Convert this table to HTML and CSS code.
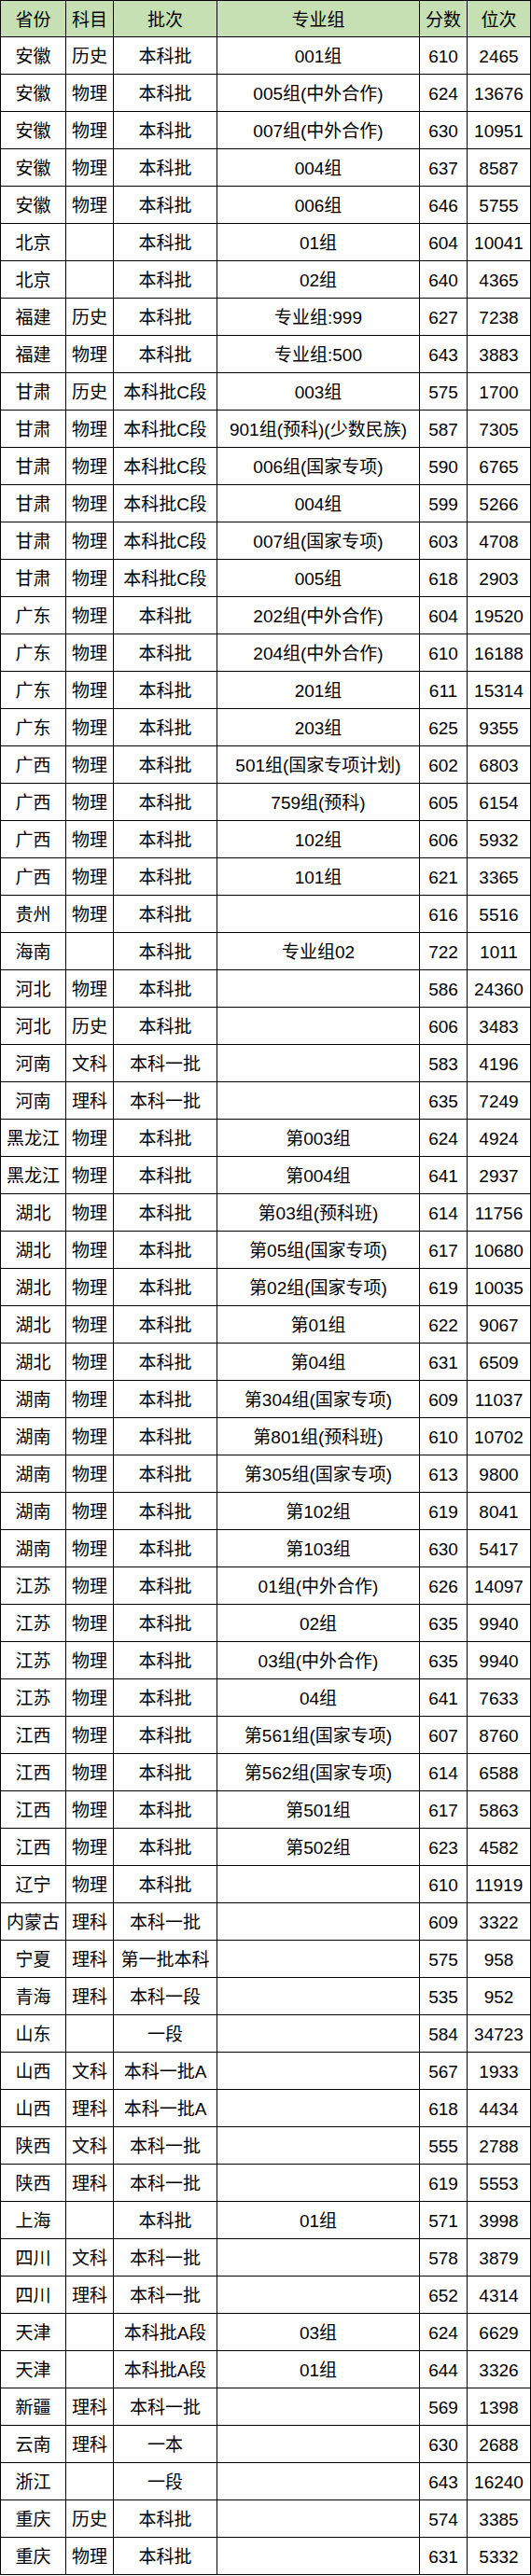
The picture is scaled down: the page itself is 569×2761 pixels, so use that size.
FILE: index.html
```html
<!DOCTYPE html>
<html lang="zh-CN">
<head>
<meta charset="utf-8">
<title>分数位次</title>
<link rel="stylesheet" href="styles.css">
</head>
<body>
<div class="sheet">
<div class="th">省份</div><div class="th">科目</div><div class="th">批次</div><div class="th">专业组</div><div class="th">分数</div><div class="th">位次</div>
<div>安徽</div><div>历史</div><div>本科批</div><div>001组</div><div>610</div><div>2465</div>
<div>安徽</div><div>物理</div><div>本科批</div><div>005组(中外合作)</div><div>624</div><div>13676</div>
<div>安徽</div><div>物理</div><div>本科批</div><div>007组(中外合作)</div><div>630</div><div>10951</div>
<div>安徽</div><div>物理</div><div>本科批</div><div>004组</div><div>637</div><div>8587</div>
<div>安徽</div><div>物理</div><div>本科批</div><div>006组</div><div>646</div><div>5755</div>
<div>北京</div><div></div><div>本科批</div><div>01组</div><div>604</div><div>10041</div>
<div>北京</div><div></div><div>本科批</div><div>02组</div><div>640</div><div>4365</div>
<div>福建</div><div>历史</div><div>本科批</div><div>专业组:999</div><div>627</div><div>7238</div>
<div>福建</div><div>物理</div><div>本科批</div><div>专业组:500</div><div>643</div><div>3883</div>
<div>甘肃</div><div>历史</div><div>本科批C段</div><div>003组</div><div>575</div><div>1700</div>
<div>甘肃</div><div>物理</div><div>本科批C段</div><div>901组(预科)(少数民族)</div><div>587</div><div>7305</div>
<div>甘肃</div><div>物理</div><div>本科批C段</div><div>006组(国家专项)</div><div>590</div><div>6765</div>
<div>甘肃</div><div>物理</div><div>本科批C段</div><div>004组</div><div>599</div><div>5266</div>
<div>甘肃</div><div>物理</div><div>本科批C段</div><div>007组(国家专项)</div><div>603</div><div>4708</div>
<div>甘肃</div><div>物理</div><div>本科批C段</div><div>005组</div><div>618</div><div>2903</div>
<div>广东</div><div>物理</div><div>本科批</div><div>202组(中外合作)</div><div>604</div><div>19520</div>
<div>广东</div><div>物理</div><div>本科批</div><div>204组(中外合作)</div><div>610</div><div>16188</div>
<div>广东</div><div>物理</div><div>本科批</div><div>201组</div><div>611</div><div>15314</div>
<div>广东</div><div>物理</div><div>本科批</div><div>203组</div><div>625</div><div>9355</div>
<div>广西</div><div>物理</div><div>本科批</div><div>501组(国家专项计划)</div><div>602</div><div>6803</div>
<div>广西</div><div>物理</div><div>本科批</div><div>759组(预科)</div><div>605</div><div>6154</div>
<div>广西</div><div>物理</div><div>本科批</div><div>102组</div><div>606</div><div>5932</div>
<div>广西</div><div>物理</div><div>本科批</div><div>101组</div><div>621</div><div>3365</div>
<div>贵州</div><div>物理</div><div>本科批</div><div></div><div>616</div><div>5516</div>
<div>海南</div><div></div><div>本科批</div><div>专业组02</div><div>722</div><div>1011</div>
<div>河北</div><div>物理</div><div>本科批</div><div></div><div>586</div><div>24360</div>
<div>河北</div><div>历史</div><div>本科批</div><div></div><div>606</div><div>3483</div>
<div>河南</div><div>文科</div><div>本科一批</div><div></div><div>583</div><div>4196</div>
<div>河南</div><div>理科</div><div>本科一批</div><div></div><div>635</div><div>7249</div>
<div>黑龙江</div><div>物理</div><div>本科批</div><div>第003组</div><div>624</div><div>4924</div>
<div>黑龙江</div><div>物理</div><div>本科批</div><div>第004组</div><div>641</div><div>2937</div>
<div>湖北</div><div>物理</div><div>本科批</div><div>第03组(预科班)</div><div>614</div><div>11756</div>
<div>湖北</div><div>物理</div><div>本科批</div><div>第05组(国家专项)</div><div>617</div><div>10680</div>
<div>湖北</div><div>物理</div><div>本科批</div><div>第02组(国家专项)</div><div>619</div><div>10035</div>
<div>湖北</div><div>物理</div><div>本科批</div><div>第01组</div><div>622</div><div>9067</div>
<div>湖北</div><div>物理</div><div>本科批</div><div>第04组</div><div>631</div><div>6509</div>
<div>湖南</div><div>物理</div><div>本科批</div><div>第304组(国家专项)</div><div>609</div><div>11037</div>
<div>湖南</div><div>物理</div><div>本科批</div><div>第801组(预科班)</div><div>610</div><div>10702</div>
<div>湖南</div><div>物理</div><div>本科批</div><div>第305组(国家专项)</div><div>613</div><div>9800</div>
<div>湖南</div><div>物理</div><div>本科批</div><div>第102组</div><div>619</div><div>8041</div>
<div>湖南</div><div>物理</div><div>本科批</div><div>第103组</div><div>630</div><div>5417</div>
<div>江苏</div><div>物理</div><div>本科批</div><div>01组(中外合作)</div><div>626</div><div>14097</div>
<div>江苏</div><div>物理</div><div>本科批</div><div>02组</div><div>635</div><div>9940</div>
<div>江苏</div><div>物理</div><div>本科批</div><div>03组(中外合作)</div><div>635</div><div>9940</div>
<div>江苏</div><div>物理</div><div>本科批</div><div>04组</div><div>641</div><div>7633</div>
<div>江西</div><div>物理</div><div>本科批</div><div>第561组(国家专项)</div><div>607</div><div>8760</div>
<div>江西</div><div>物理</div><div>本科批</div><div>第562组(国家专项)</div><div>614</div><div>6588</div>
<div>江西</div><div>物理</div><div>本科批</div><div>第501组</div><div>617</div><div>5863</div>
<div>江西</div><div>物理</div><div>本科批</div><div>第502组</div><div>623</div><div>4582</div>
<div>辽宁</div><div>物理</div><div>本科批</div><div></div><div>610</div><div>11919</div>
<div>内蒙古</div><div>理科</div><div>本科一批</div><div></div><div>609</div><div>3322</div>
<div>宁夏</div><div>理科</div><div>第一批本科</div><div></div><div>575</div><div>958</div>
<div>青海</div><div>理科</div><div>本科一段</div><div></div><div>535</div><div>952</div>
<div>山东</div><div></div><div>一段</div><div></div><div>584</div><div>34723</div>
<div>山西</div><div>文科</div><div>本科一批A</div><div></div><div>567</div><div>1933</div>
<div>山西</div><div>理科</div><div>本科一批A</div><div></div><div>618</div><div>4434</div>
<div>陕西</div><div>文科</div><div>本科一批</div><div></div><div>555</div><div>2788</div>
<div>陕西</div><div>理科</div><div>本科一批</div><div></div><div>619</div><div>5553</div>
<div>上海</div><div></div><div>本科批</div><div>01组</div><div>571</div><div>3998</div>
<div>四川</div><div>文科</div><div>本科一批</div><div></div><div>578</div><div>3879</div>
<div>四川</div><div>理科</div><div>本科一批</div><div></div><div>652</div><div>4314</div>
<div>天津</div><div></div><div>本科批A段</div><div>03组</div><div>624</div><div>6629</div>
<div>天津</div><div></div><div>本科批A段</div><div>01组</div><div>644</div><div>3326</div>
<div>新疆</div><div>理科</div><div>本科一批</div><div></div><div>569</div><div>1398</div>
<div>云南</div><div>理科</div><div>一本</div><div></div><div>630</div><div>2688</div>
<div>浙江</div><div></div><div>一段</div><div></div><div>643</div><div>16240</div>
<div>重庆</div><div>历史</div><div>本科批</div><div></div><div>574</div><div>3385</div>
<div>重庆</div><div>物理</div><div>本科批</div><div></div><div>631</div><div>5332</div>
</div>
</body>
</html>
```

FILE: styles.css
```css
html, body {
  margin: 0;
  padding: 0;
  background: #ffffff;
}

.sheet {
  display: grid;
  grid-template-columns: 70px 51px 111px 217px 51px 68px;
  grid-template-rows: 39px;
  grid-auto-rows: 40px;
  width: max-content;
  border-top: 1px solid #000;
  border-left: 1px solid #000;
  font-family: "Liberation Sans", "Noto Sans CJK SC", sans-serif;
  font-size: 19px;
  color: #000;
}

.sheet > div {
  box-sizing: border-box;
  border-right: 1px solid #000;
  border-bottom: 1px solid #000;
  padding-top: 3px;
  line-height: 36px;
  text-align: center;
  white-space: nowrap;
  overflow: hidden;
}

.sheet > .th {
  background: #c6e0b4;
  line-height: 35px;
}
```
